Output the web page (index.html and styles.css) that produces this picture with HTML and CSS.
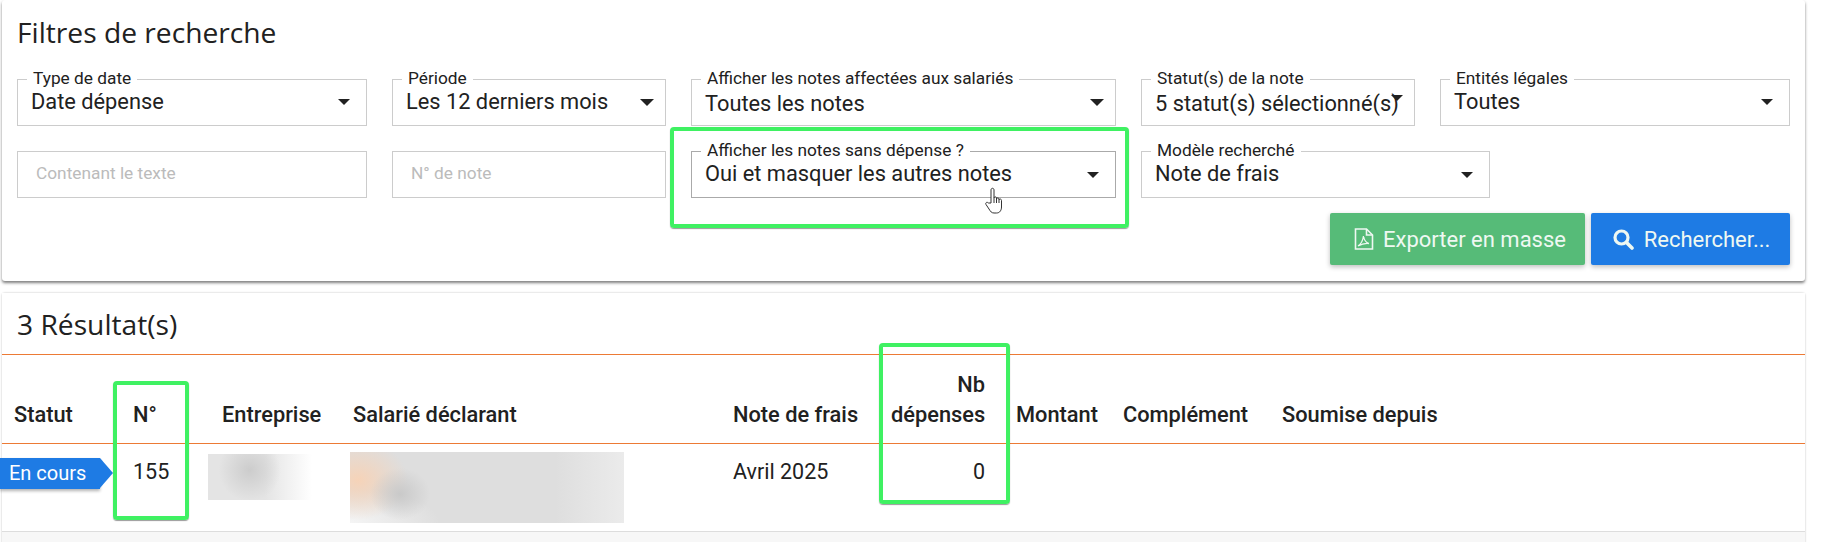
FILE: index.html
```html
<!DOCTYPE html>
<html lang="fr">

<head>
    <meta charset="UTF-8">
    <title>Notes de frais</title>
    <link rel="stylesheet" href="styles.css">
</head>

<body>
    <section class="card filters">
        <h2 class="card-title">Filtres de recherche</h2>
        <div class="row">
            <fieldset class="field w-350">
                <legend>Type de date</legend>
                <div class="value">Date dépense</div>
                <span class="caret"></span>
            </fieldset>
            <fieldset class="field w-274">
                <legend>Période</legend>
                <div class="value">Les 12 derniers mois</div>
                <span class="caret caret-big"></span>
            </fieldset>
            <fieldset class="field w-425 low">
                <legend>Afficher les notes affectées aux salariés</legend>
                <div class="value">Toutes les notes</div>
                <span class="caret caret-big"></span>
            </fieldset>
            <fieldset class="field w-274 low tight">
                <legend>Statut(s) de la note</legend>
                <div class="value">5 statut(s) sélectionné(s)</div>
                <span class="caret"></span>
            </fieldset>
            <fieldset class="field w-350">
                <legend>Entités légales</legend>
                <div class="value">Toutes</div>
                <span class="caret"></span>
            </fieldset>
        </div>
        <div class="row">
            <input class="text-input w-350" type="text" placeholder="Contenant le texte">
            <input class="text-input w-274" type="text" placeholder="N° de note">
            <fieldset class="field w-425 drop dark">
                <legend>Afficher les notes sans dépense ?</legend>
                <div class="value">Oui et masquer les autres notes</div>
                <span class="caret"></span>
            </fieldset>
            <fieldset class="field w-349 drop">
                <legend>Modèle recherché</legend>
                <div class="value">Note de frais</div>
                <span class="caret"></span>
            </fieldset>
        </div>
        <div class="actions">
            <button class="btn btn-green" type="button">
                <svg class="btn-icon" width="20" height="22" viewBox="0 0 20 22" fill="none" stroke="currentColor" stroke-width="1.6">
                    <path d="M1.500 1h11l6 6v14h-17z" />
                    <path d="M12.500 1v6h6" />
                    <path d="M4 18c3-2 5-6 5.500-10M9.500 8c.5 3.500 2.500 6.500 5.500 7.500M15 15.500c-4-.5-7.500.5-11 2.500" stroke-width="1.300" />
                </svg>
                Exporter en masse
            </button>
            <button class="btn btn-blue" type="button">
                <svg class="btn-icon" width="21" height="21" viewBox="0 0 21 21" fill="none" stroke="currentColor">
                    <circle cx="8.500" cy="8.500" r="6.500" stroke-width="3.200" />
                    <path d="M13.500 13.500l5.500 5.500" stroke-width="3.600" stroke-linecap="round" />
                </svg>
                Rechercher...
            </button>
        </div>

        <div class="mark mark-filter"></div>
        <svg class="hand" width="20" height="27" viewBox="0 0 20 27" fill="#fff" stroke="#333" stroke-width="1">
            <path d="M6 16V3c0-2.300 3-2.300 3 0v8c0-1.500 2.500-1.500 2.500 0v1c0-1.500 2.500-1.500 2.500 0v1c0-1.400 2.500-1.400 2.500.5V20c0 3-1.500 6-5 6H9c-2.500 0-3.500-1.500-5-4l-3-4.500c-1-1.700 1-3 2.500-1.500z" />
            <path d="M9 11v5M11.500 12v4M14 13v3" />
        </svg>
    </section>

    <section class="card results">
        <h2 class="card-title">3 Résultat(s)</h2>
        <table class="table">
            <colgroup>
                <col class="c-statut">
                <col class="c-num">
                <col class="c-ent">
                <col class="c-sal">
                <col class="c-note">
                <col class="c-nb">
                <col class="c-montant">
                <col class="c-comp">
                <col>
            </colgroup>
            <thead>
                <tr>
                    <th>Statut</th>
                    <th>N°</th>
                    <th>Entreprise</th>
                    <th>Salarié déclarant</th>
                    <th>Note de frais</th>
                    <th class="right">Nb<br>dépenses</th>
                    <th>Montant</th>
                    <th>Complément</th>
                    <th>Soumise depuis</th>
                </tr>
            </thead>
            <tbody>
                <tr>
                    <td><span class="badge">En cours</span></td>
                    <td>155</td>
                    <td><div class="blur-ent"></div></td>
                    <td><div class="blur-sal"></div></td>
                    <td>Avril 2025</td>
                    <td class="right">0</td>
                    <td></td>
                    <td></td>
                    <td></td>
                </tr>
            </tbody>
        </table>
        <div class="mark mark-num"></div>
        <div class="mark mark-nb"></div>
    </section>
</body>

</html>
```

FILE: styles.css
```css
html,
body {
    margin: 0;
    height: 542px;
    overflow: hidden;
}

body {
    background-color: #fff;
    font-family: Roboto, "Liberation Sans", sans-serif;
    color: #212121;
}

.card {
    position: relative;
    width: 1803px;
    margin-left: 2px;
    background-color: #fff;
    border-radius: 3px;
}

.card-title {
    margin: 0;
    font-family: "Open Sans", sans-serif;
    font-size: 28.200px;
    font-weight: 400;
    line-height: 33px;
}

.filters {
    height: 281px;
    padding: 16px 0 0 15px;
    box-sizing: border-box;
    box-shadow: 0 2px 3px rgba(0, 0, 0, .5);
}

.filters .card-title {
    margin-bottom: 21px;
}

.row {
    display: flex;
    align-items: flex-end;
    gap: 25px;
    margin-bottom: 16px;
}

.w-350 {
    width: 350px;
}

.w-349 {
    width: 349px;
}

.w-274 {
    width: 274px;
}

.w-425 {
    width: 425px;
}

.field {
    display: flex;
    box-sizing: border-box;
    height: 56px;
    margin: 0;
    padding: 0 16px 0 13px;
    border: 1px solid #ccc;
    min-width: 0;
}

.field legend {
    margin-left: -4px;
    padding: 0 6px 2px;
    font-size: 17.300px;
    line-height: 17px;
    white-space: nowrap;
}

.value {
    flex: 1;
    min-width: 0;
    font-size: 21.800px;
    line-height: 26px;
    white-space: nowrap;
}

.low .value {
    margin-top: 2px;
}

.dark {
    border-color: #aaa;
}

.caret {
    flex: none;
    width: 0;
    height: 0;
    margin-top: 10px;
    border-style: solid;
    border-width: 6px 6px 0;
    border-color: #212121 transparent transparent;
}

.caret-big {
    margin-right: -5px;
    border-width: 7px 7px 0;
}

.tight .caret {
    margin: 6px -5px 0 0;
}

.drop .caret {
    margin-top: 11px;
}

.text-input {
    box-sizing: border-box;
    height: 47px;
    padding: 0 18px 4px;
    border: 1px solid #ccc;
    font-family: Roboto, sans-serif;
    font-size: 17.300px;
    outline: none;
}

.text-input::placeholder {
    color: #bbb;
}

.actions {
    display: flex;
    justify-content: flex-end;
    gap: 6px;
    margin: -1px 15px 0 0;
}

.btn {
    display: flex;
    align-items: center;
    justify-content: center;
    height: 52px;
    border: 0;
    border-radius: 2px;
    font-family: Roboto, sans-serif;
    font-size: 22px;
    color: #eef8f2;
    box-shadow: 0 2px 5px rgba(0, 0, 0, .25);
}

.btn-green {
    gap: 9px;
    width: 255px;
    padding: 0 0 0 5px;
    background-color: #56bb78;
}

.btn-blue {
    gap: 10px;
    width: 199px;
    padding: 0 0 0 2px;
    background-color: #1e7be4;
}

.results {
    margin-top: 12px;
    height: 262px;
    background-color: #f7f7f7;
    box-shadow: 0 0 2px rgba(0, 0, 0, .3);
}

.results .card-title {
    box-sizing: border-box;
    height: 62px;
    padding: 15px 0 0 15px;
    border-bottom: 1px solid #ec7a35;
    background-color: #fff;
}

.table {
    width: 100%;
    border-collapse: collapse;
    table-layout: fixed;
    background-color: #fff;
}

.c-statut {
    width: 118px;
}

.c-num {
    width: 89px;
}

.c-ent {
    width: 131px;
}

.c-sal {
    width: 380px;
}

.c-note {
    width: 158px;
}

.c-nb {
    width: 125px;
}

.c-montant {
    width: 107px;
}

.c-comp {
    width: 159px;
}

.table th {
    height: 88px;
    padding: 0 13px 13px;
    box-sizing: border-box;
    border-bottom: 1px solid #ec7a35;
    font-size: 21.800px;
    font-weight: 500;
    line-height: 30px;
    text-align: left;
    vertical-align: bottom;
    white-space: nowrap;
}

.table th:first-child {
    padding-left: 12px;
}

.table td {
    height: 88px;
    padding: 8px 13px 0;
    box-sizing: border-box;
    border-bottom: 1px solid #ddd;
    font-size: 21.500px;
    vertical-align: top;
    line-height: 40px;
}

.table th.right,
.table td.right {
    padding-right: 18px;
    text-align: right;
}

.badge {
    position: relative;
    display: block;
    width: 100px;
    height: 31px;
    margin: 6px 0 0 -15px;
    padding-left: 9px;
    box-sizing: border-box;
    background-color: #1e7be4;
    box-shadow: 0 2px 3px rgba(0, 0, 0, .3);
    color: #fff;
    font-size: 20px;
    line-height: 31px;
}

.badge::after {
    content: "";
    position: absolute;
    left: 100%;
    top: 0;
    border-style: solid;
    border-width: 15.500px 0 15.500px 13px;
    border-color: transparent transparent transparent #1e7be4;
}

.blur-ent {
    width: 104px;
    height: 46px;
    margin: 2px 0 0 -14px;
    background:
        radial-gradient(circle at 40% 35%, #ccc, rgba(204, 204, 204, 0) 45%),
        linear-gradient(to right, #e4e4e4 55%, #fff);
}

.blur-sal {
    width: 274px;
    height: 71px;
    margin: 0 0 0 -3px;
    background:
        radial-gradient(30px 26px at 50px 42px, #c9c9c9, rgba(201, 201, 201, 0)),
        radial-gradient(50px 40px at 8px 28px, #f6d3b8, rgba(246, 211, 184, 0)),
        radial-gradient(90px 34px at 0 100%, #f5f5f5, rgba(245, 245, 245, 0)),
        linear-gradient(to right, #dedede 75%, #ebebeb);
}

.mark {
    position: absolute;
    box-sizing: border-box;
    border: 4px solid #3ff162;
    border-radius: 4px;
    box-shadow: 0 1px 1px rgba(0, 0, 0, .4);
}

.mark-filter {
    left: 668px;
    top: 127px;
    width: 459px;
    height: 101px;
}

.mark-num {
    left: 111px;
    top: 88px;
    width: 76px;
    height: 139px;
}

.mark-nb {
    left: 877px;
    top: 50px;
    width: 131px;
    height: 161px;
}

.hand {
    position: absolute;
    left: 983px;
    top: 187px;
}
```
